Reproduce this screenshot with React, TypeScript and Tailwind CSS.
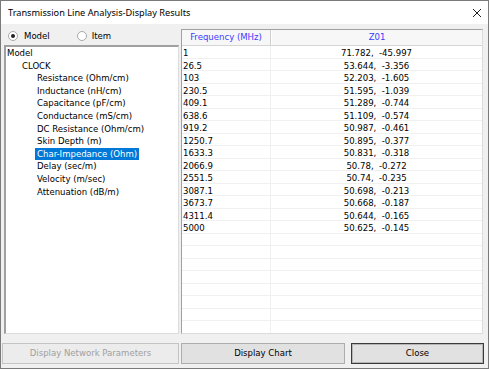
const treeItems = [
  "Resistance (Ohm/cm)",
  "Inductance (nH/cm)",
  "Capacitance (pF/cm)",
  "Conductance (mS/cm)",
  "DC Resistance (Ohm/cm)",
  "Skin Depth (m)",
  "Char-Impedance (Ohm)",
  "Delay (sec/m)",
  "Velocity (m/sec)",
  "Attenuation (dB/m)",
];

const rows: [string, string][] = [
  ["1", "71.782,  -45.997"],
  ["26.5", "53.644,  -3.356"],
  ["103", "52.203,  -1.605"],
  ["230.5", "51.595,  -1.039"],
  ["409.1", "51.289,  -0.744"],
  ["638.6", "51.109,  -0.574"],
  ["919.2", "50.987,  -0.461"],
  ["1250.7", "50.895,  -0.377"],
  ["1633.3", "50.831,  -0.318"],
  ["2066.9", "50.78,  -0.272"],
  ["2551.5", "50.74,  -0.235"],
  ["3087.1", "50.698,  -0.213"],
  ["3673.7", "50.668,  -0.187"],
  ["4311.4", "50.644,  -0.165"],
  ["5000", "50.625,  -0.145"],
];

function Radio({ checked }: { checked?: boolean }) {
  return (
    <svg width="10" height="10" viewBox="0 0 10 10" className="shrink-0">
      <circle cx="5" cy="5" r="4.5" fill="#fff" stroke="#a8a8a8" />
      {checked && <circle cx="5" cy="5" r="2" fill="#222" />}
    </svg>
  );
}

export default function App() {
  const emptyRows = Array.from({ length: 9 });

  return (
    <div className="flex h-[369px] w-[489px] flex-col border border-[#7a7a7a] bg-[#f0f0f0] font-['DejaVu_Sans_Condensed','DejaVu_Sans',sans-serif] text-[9.5px] text-black">
      {/* title bar */}
      <div className="flex h-[23px] shrink-0 items-center justify-between bg-white pr-[6px] pl-[7px]">
        <span className="font-['Noto_Sans',sans-serif] text-[9.2px] text-black">
          Transmission Line Analysis-Display Results
        </span>
        <svg width="10" height="10" viewBox="0 0 10 10">
          <path d="M1 1 L9 9 M9 1 L1 9" stroke="#222" strokeWidth="1" />
        </svg>
      </div>

      {/* body */}
      <div className="flex h-[305px] gap-[2px] pt-[5px] pl-[3px] box-content">
        <div className="flex w-[175px] flex-col">
          <div className="flex h-[16px] items-center pb-[2px]">
            <div className="flex items-center gap-[6px] pl-[4px]">
              <Radio checked />
              <span>Model</span>
            </div>
            <div className="ml-[27px] flex items-center gap-[5px]">
              <Radio />
              <span>Item</span>
            </div>
          </div>
          <div className="flex-1 border-t-2 border-l-2 border-r border-b border-t-[#a0a0a0] border-l-[#a0a0a0] border-r-[#dcdcdc] border-b-[#dcdcdc] bg-white pl-[1px] leading-[12.6px]">
            <div className="h-[12.6px]">Model</div>
            <div className="h-[12.6px] pl-[15px]">CLOCK</div>
            {treeItems.map((t) => (
              <div key={t} className="h-[12.6px] pl-[30px]">
                {t === "Char-Impedance (Ohm)" ? (
                  <span className="-ml-[2px] inline-block bg-[#0078d7] px-[2px] text-white outline-1 outline-dotted outline-[#fff]">
                    {t}
                  </span>
                ) : (
                  t
                )}
              </div>
            ))}
          </div>
        </div>

        <div className="flex h-[305px] w-[302px] flex-col overflow-hidden border border-t-[#a0a0a0] border-l-[#a0a0a0] border-r-[#dcdcdc] border-b-[#dcdcdc] bg-white">
          <div className="flex h-[16px] shrink-0 border-b border-[#d5d5d5] bg-[#f7f7f7] text-[#3b3bff]">
            <div className="flex w-[89px] items-center justify-center border-r border-[#cfcfcf]">
              Frequency (MHz)
            </div>
            <div className="flex flex-1 items-center justify-center border-l border-white">Z01</div>
          </div>
          {rows.map(([f, z]) => (
            <div key={f} className="flex h-[12.5px] shrink-0 border-b border-[#f0f0f0] leading-[13px]">
              <div className="w-[89px] border-r border-[#f0f0f0] pl-[1px]">{f}</div>
              <div className="flex-1 text-center whitespace-pre">{z}</div>
            </div>
          ))}
          {emptyRows.map((_, i) => (
            <div key={i} className="flex h-[12.5px] shrink-0 border-b border-[#f0f0f0]">
              <div className="w-[89px] border-r border-[#f0f0f0]" />
              <div className="flex-1" />
            </div>
          ))}
        </div>
      </div>

      {/* buttons */}
      <div className="mt-[9px] flex h-[21px] pl-[1px]">
        <button className="w-[177px] border border-[#c4c4c4] bg-[#ececec] text-[#a0a0a0]">
          Display Network Parameters
        </button>
        <button className="ml-[2px] w-[164px] border border-[#adadad] bg-[#e1e1e1]">
          Display Chart
        </button>
        <button className="ml-[6px] w-[133px] border border-[#3a3a3a] bg-[#e1e1e1] shadow-[inset_0_0_0_1px_#b5b5b5]">
          Close
        </button>
      </div>
    </div>
  );
}
